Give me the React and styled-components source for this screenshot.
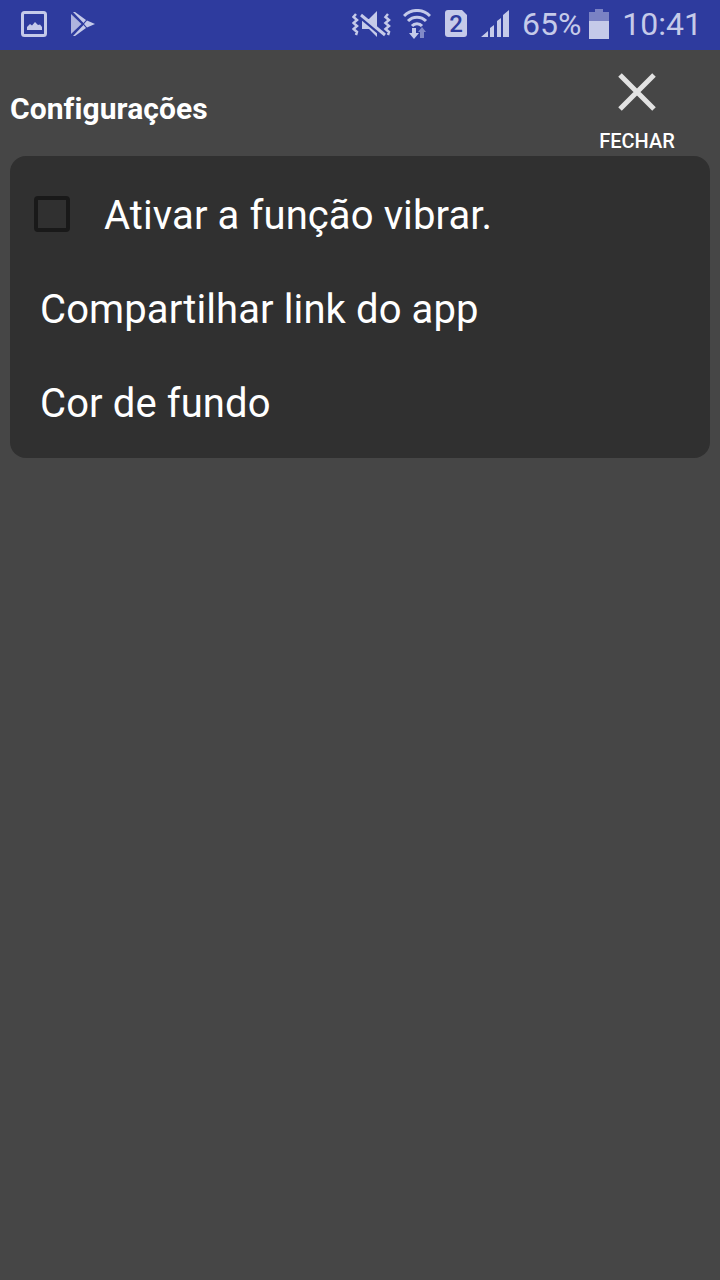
import styled, { createGlobalStyle } from 'styled-components';

const GlobalStyle = createGlobalStyle`
  html, body {
    margin: 0;
    padding: 0;
    background: #464646;
  }

  * {
    box-sizing: border-box;
  }
`;

const Screen = styled.div`
  width: 720px;
  height: 1280px;
  background: #464646;
  overflow: hidden;
  font-family: Roboto, "Liberation Sans", sans-serif;
  color: #fff;
`;

const StatusBar = styled.div`
  height: 50px;
  background: #2e3b9e;
  display: flex;
  align-items: center;
  justify-content: space-between;
  padding: 0 18px 3px 21px;
  color: #c5cae9;
`;

const StatusGroup = styled.div`
  display: flex;
  align-items: center;
`;

const StatusSlot = styled.span`
  display: flex;
  margin-left: ${props => props.$left || 0}px;
`;

const StatusText = styled.span`
  font-size: 32px;
  line-height: 38px;
  margin-left: ${props => props.$left || 0}px;
`;

const Header = styled.header`
  height: 106px;
  display: flex;
  justify-content: space-between;
  padding: 0 46px 0 10px;
`;

const Title = styled.h1`
  margin: 43px 0 0;
  font-size: 30px;
  line-height: 32px;
  font-weight: 700;
  letter-spacing: 0.08px;
`;

const CloseButton = styled.button`
  width: 74px;
  padding: 23px 0 0;
  border: 0;
  background: none;
  color: #fff;
  font-family: inherit;
  display: flex;
  flex-direction: column;
  align-items: center;
`;

const CloseLabel = styled.span`
  margin-top: 18px;
  font-size: 20px;
  line-height: 24px;
  font-weight: 500;
`;

const Panel = styled.section`
  margin: 0 10px;
  height: 302px;
  background: #303030;
  border-radius: 16px;
  display: flex;
  flex-direction: column;
  padding-top: 12px;
`;

const Row = styled.div`
  height: 94px;
  display: flex;
  align-items: center;
  padding-left: ${props => props.$inset}px;
  font-size: 40px;
  letter-spacing: 0.1px;
`;

const Checkbox = styled.span`
  width: 36px;
  height: 36px;
  margin: 0 34px 3px 0;
  border: 4px solid #191919;
  border-radius: 4px;
`;

const PictureIcon = () => (
  <svg width="26" height="26" viewBox="0 0 26 26" fill="none">
    <rect x="1.5" y="1.5" width="23" height="23" rx="2" stroke="currentColor" strokeWidth="3" />
    <path d="M6 19v-3l3-3 2 1.500 3-3.500 3 3 2-.5 2 2.500v3z" fill="currentColor" />
  </svg>
);

const PlayIcon = () => (
  <svg width="24" height="24" viewBox="0 0 24 24" fill="currentColor">
    <path d="M2 0h2l11 8-2.500 3z" />
    <path d="M0 2l10.500 10L0 22z" opacity=".85" />
    <path d="M2 24h2l11-8-2.500-3z" />
    <path d="M16 8.500l8 3.500-8 3.500-3-3.500z" />
  </svg>
);

const MuteIcon = () => (
  <svg width="40" height="30" viewBox="0 0 40 30" fill="none">
    <path d="M10 10h7l8-8v26l-8-8h-7z" fill="currentColor" />
    <path d="M8 8l25 21" stroke="#2e3b9e" strokeWidth="3" />
    <path d="M9 6l24 20" stroke="currentColor" strokeWidth="3" />
    <path d="M4 5L1.500 8 5 11 1.500 14 5 17 1.500 20 5 23l-1 3M36 5l-2.500 3L37 11l-3.500 3L37 17l-3.500 3L37 23l-1 3" stroke="currentColor" strokeWidth="2.500" />
  </svg>
);

const WifiIcon = () => (
  <svg width="28" height="30" viewBox="0 0 28 30" fill="none">
    <path d="M1 7a18 18 0 0 1 26 0M5 12a12.500 12.500 0 0 1 18 0M9 17a6.500 6.500 0 0 1 10 0" stroke="currentColor" strokeWidth="3" />
    <path d="M9 19h4v5h3l-5 6-5-6h3z" fill="currentColor" />
    <path d="M19 18l4 5h-2v6h-4v-6h-2z" fill="currentColor" opacity=".55" />
  </svg>
);

const SimIcon = () => (
  <svg width="22" height="27" viewBox="0 0 22 27">
    <path d="M3 0h14l5 5v19a3 3 0 0 1-3 3H3a3 3 0 0 1-3-3V3a3 3 0 0 1 3-3z" fill="currentColor" />
    <text x="11" y="22" textAnchor="middle" fontSize="24" fontWeight="500" fontFamily="Roboto, sans-serif" fill="#2e3b9e">2</text>
  </svg>
);

const SignalIcon = () => (
  <svg width="28" height="28" viewBox="0 0 28 28" fill="currentColor">
    <path d="M0 27l7-6v6zM9 27V18l4-3v12zM16 27V11l4-3v19zM22 27V5l6-5v27z" />
  </svg>
);

const BatteryIcon = () => (
  <svg width="20" height="30" viewBox="0 0 20 30" fill="currentColor">
    <path d="M6 0h8v3h6v9H0V3h6z" opacity=".5" />
    <path d="M0 12h20v18H0z" />
  </svg>
);

const CloseIcon = () => (
  <svg width="38" height="38" viewBox="0 0 38 38" fill="none">
    <path d="M2 2l34 34M36 2L2 36" stroke="#e2e2e2" strokeWidth="5" />
  </svg>
);

export default function App() {
  return (
    <Screen>
      <GlobalStyle />
      <StatusBar>
        <StatusGroup>
          <PictureIcon />
          <StatusSlot $left={24}><PlayIcon /></StatusSlot>
        </StatusGroup>
        <StatusGroup>
          <MuteIcon />
          <StatusSlot $left={11}><WifiIcon /></StatusSlot>
          <StatusSlot $left={14}><SimIcon /></StatusSlot>
          <StatusSlot $left={14}><SignalIcon /></StatusSlot>
          <StatusText $left={13}>65%</StatusText>
          <StatusSlot $left={8}><BatteryIcon /></StatusSlot>
          <StatusText $left={13}>10:41</StatusText>
        </StatusGroup>
      </StatusBar>
      <Header>
        <Title>Configurações</Title>
        <CloseButton>
          <CloseIcon />
          <CloseLabel>FECHAR</CloseLabel>
        </CloseButton>
      </Header>
      <Panel>
        <Row $inset={24}>
          <Checkbox />
          Ativar a função vibrar.
        </Row>
        <Row $inset={30}>Compartilhar link do app</Row>
        <Row $inset={30}>Cor de fundo</Row>
      </Panel>
    </Screen>
  );
}
